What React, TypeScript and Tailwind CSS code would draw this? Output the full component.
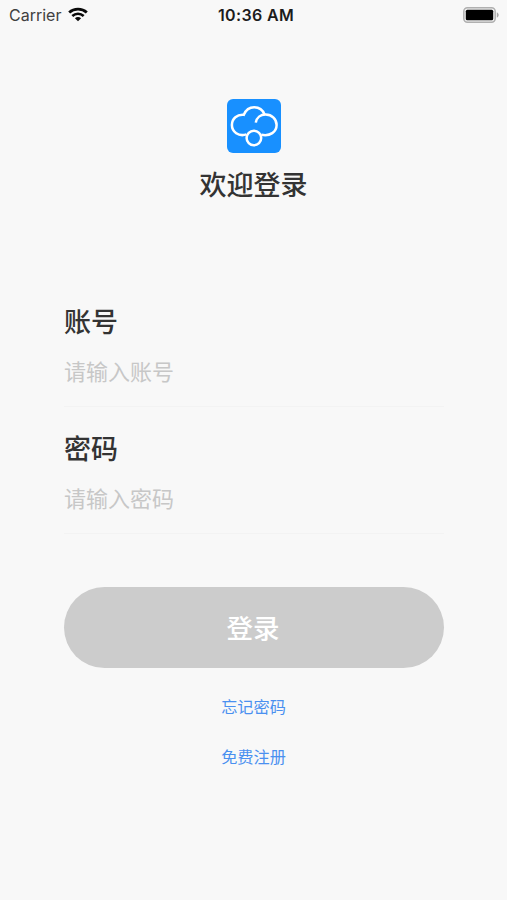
import { useState } from "react";

function StatusBar() {
  return (
    <div className="grid grid-cols-3 items-center h-[30px] pl-[9px] pr-[7px] font-['Inter']">
      <div className="flex items-center gap-[7px]">
        <span className="text-[16px] text-[#404040]">Carrier</span>
        <svg className="-mt-[2px]" width="20" height="15" viewBox="0 0 20 15" fill="none" stroke="#0a0a0a">
          <path d="M1.2 5.4C6 0.9 14 0.9 18.8 5.4" strokeWidth="2.8" />
          <path d="M4.3 9C7.6 6 12.4 6 15.7 9" strokeWidth="2.6" />
          <path d="M10 14.3L6.9 11.3C8.7 9.7 11.3 9.7 13.1 11.3Z" fill="#0a0a0a" stroke="none" />
        </svg>
      </div>
      <span className="pl-[3px] text-center text-[16px] font-semibold tracking-[0.35px] text-[#1c1c1c] whitespace-nowrap">
        10:36 AM
      </span>
      <svg className="justify-self-end" width="37" height="16" viewBox="0 0 37 16">
        <rect x="0.8" y="0.8" width="31.4" height="14.4" rx="3.6" fill="#f0f0f0" stroke="#b0b0b0" strokeWidth="1.5" />
        <rect x="2.8" y="2.8" width="27.4" height="10.4" rx="1.5" fill="#000" />
        <path d="M33.8 5.5C36.3 6.1 36.3 9.9 33.8 10.5Z" fill="#a8a8a8" />
      </svg>
    </div>
  );
}

function Logo() {
  return (
    <svg width="54" height="54" viewBox="0 0 54 54" fill="none" stroke="#fff" strokeWidth="2.5">
      <rect width="54" height="54" rx="6" fill="#1890ff" stroke="none" />
      <path d="M19.4 35.4C11.6 38 4.9 32.8 4.9 26C4.9 19.4 10.2 15.2 16.8 15.8C18.8 11 22.6 8.3 27.2 8.3C32 8.3 35.8 11 37.6 15.6" />
      <path d="M28.8 23.6C29.6 18.6 33.6 15.5 38.6 15.5C45 15.5 49.6 20.2 49.6 26C49.6 32.8 43.2 37.6 34.3 35.7" />
      <circle cx="26.9" cy="39" r="7.3" />
    </svg>
  );
}

type FieldProps = {
  label: string;
  placeholder: string;
  type: string;
  value: string;
  onChange: (value: string) => void;
};

function Field({ label, placeholder, type, value, onChange }: FieldProps) {
  return (
    <label className="flex flex-col h-[127px]">
      <span className="text-[27px] leading-[40px] font-medium text-[#333]">{label}</span>
      <input
        className="mt-[12px] h-[34px] text-[22px] placeholder:text-[#c7c7c7] text-[#333] outline-none"
        type={type}
        placeholder={placeholder}
        value={value}
        onChange={(e) => onChange(e.target.value)}
      />
      <span className="mt-[19px] h-px bg-[#f3f3f3]" />
    </label>
  );
}

export default function App() {
  const [account, setAccount] = useState("");
  const [password, setPassword] = useState("");

  return (
    <div className="h-[900px] bg-[#f8f8f8] font-['Noto_Sans_CJK_SC',sans-serif]">
      <StatusBar />
      <div className="flex flex-col items-center pt-[69px]">
        <Logo />
        <h1 className="mt-[11px] text-[27px] leading-[40px] font-medium text-[#333]">欢迎登录</h1>
      </div>
      <form className="flex flex-col pt-[97px] pl-[64px] pr-[63px]">
        <Field label="账号" placeholder="请输入账号" type="text" value={account} onChange={setAccount} />
        <Field label="密码" placeholder="请输入密码" type="password" value={password} onChange={setPassword} />
        <button
          className="mt-[32px] h-[81px] pb-[2px] pr-[2px] rounded-full bg-[#ccc] text-[26.5px] font-medium text-white"
          type="button"
        >
          登录
        </button>
      </form>
      <div className="flex flex-col items-center gap-[26px] mt-[26px] text-[16.2px] leading-[24px] text-[#4a90f0]">
        <a href="#">忘记密码</a>
        <a href="#">免费注册</a>
      </div>
    </div>
  );
}
